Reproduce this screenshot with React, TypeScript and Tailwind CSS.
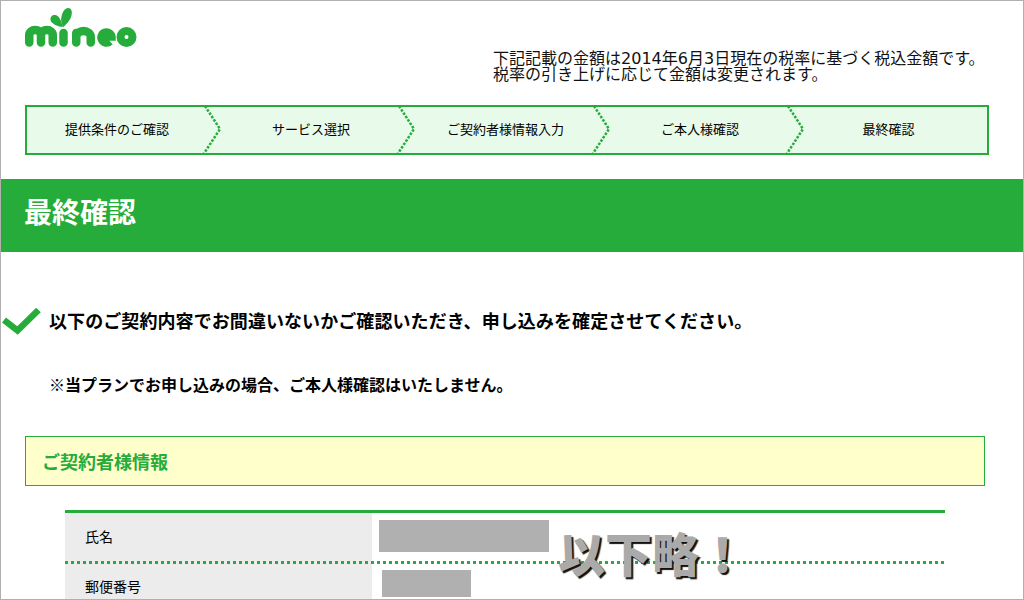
const jp = { fontFamily: '"Noto Sans CJK JP", sans-serif' };

const steps = [
  { label: "提供条件のご確認", cls: "w-[178px] pl-[2px]" },
  { label: "サービス選択", cls: "w-[194px] pl-[18px]" },
  { label: "ご契約者様情報入力", cls: "w-[195px] pl-[18px]" },
  { label: "ご本人様確認", cls: "w-[194px] pl-[18px]" },
  { label: "最終確認", cls: "flex-1 pl-[2px]" },
];

function Logo() {
  return (
    <svg viewBox="25 8 112 40" className="w-[112px] h-[40px] block" fill="none" stroke="#25ac3a" strokeWidth="8.5" strokeLinecap="round">
      {/* m */}
      <path d="M29.250 42.500V35a5.870 5 0 0 1 11.750 0v7.500M41 35a5.870 5 0 0 1 11.750 0v7.500" />
      {/* i + 葉っぱ */}
      <path d="M63.500 33v9.500" />
      <path stroke="none" fill="#25ac3a" d="M63 27.500c-1.500-4.500-2.500-7.500-1.500-11 1-4.500 3.500-8.500 6.500-8.500 3.500 0 4.500 3.500 3.500 7.500-1 4.500-4.500 8-8.500 12z" />
      <path stroke="none" fill="#25ac3a" d="M62.500 27c-5-.5-11.500-3.500-12-7-.3-3.500 2-5.500 5-5 3.500.5 6.500 6.500 7 12z" />
      {/* n */}
      <path d="M76.250 42.500V33M76.250 37a7.250 6 0 0 1 14.500 0v5.500" />
      {/* e */}
      <path strokeWidth="6.500" strokeLinecap="butt" d="M100.500 37.500h12a6 6 0 1 0-2 4.500" />
      {/* o */}
      <circle cx="126.500" cy="37" r="6" strokeWidth="8" />
    </svg>
  );
}

function Chevron() {
  return (
    <svg viewBox="0 0 20 50" className="absolute left-[-3px] top-[-2px] w-[20px] h-[50px]" fill="none" stroke="#25ac3a" strokeWidth="2.500" strokeDasharray="2.500 1.500">
      <path d="M3 1L18 24L1 50" />
    </svg>
  );
}

export default function App() {
  return (
    <div className="box-border w-[1024px] h-[600px] relative overflow-hidden bg-white border border-[#b0b0b0] text-black" style={jp}>
      {/* ヘッダー */}
      <div className="flex h-[104px]">
        <div className="pl-[24px] pt-[7px]">
          <Logo />
        </div>
        <div className="ml-[356px] pt-[48px] text-[16px] leading-[16px] text-[#111]">
          <p className="h-[16px] whitespace-nowrap">
            下記記載の金額は<span className="font-['DejaVu_Sans']">2014</span>年<span className="font-['DejaVu_Sans']">6</span>月<span className="font-['DejaVu_Sans']">3</span>日現在の税率に基づく税込金額です。
          </p>
          <p className="h-[16px] whitespace-nowrap">税率の引き上げに応じて金額は変更されます。</p>
        </div>
      </div>

      {/* ステップ */}
      <ul className="ml-[24px] w-[964px] h-[50px] flex border-2 border-[#25ac3a] bg-[#e8faea] text-[13px]">
        {steps.map((s, idx) => (
          <li key={idx} className={"relative flex items-center justify-center pb-[2px] " + s.cls}>
            {idx > 0 && <Chevron />}
            <span>{s.label}</span>
          </li>
        ))}
      </ul>

      {/* タイトル */}
      <h1 className="mt-[24px] h-[73px] bg-[#25ac3a] pl-[23px] pb-[9px] flex items-center text-[28px] font-bold text-white">最終確認</h1>

      {/* メッセージ */}
      <div className="mt-[53px] flex items-center h-[32px]">
        <svg viewBox="0 0 40 30" className="ml-[1px] w-[40px] h-[30px] shrink-0" fill="none" stroke="#25ac3a" strokeWidth="6.500">
          <path d="M2 14L15.500 24.500L36.500 4" />
        </svg>
        <p className="ml-[7px] pb-[2px] text-[18px] font-bold whitespace-nowrap tracking-[0.08px]">以下のご契約内容でお間違いないかご確認いただき、申し込みを確定させてください。</p>
      </div>
      <p className="mt-[34px] ml-[48px] h-[28px] leading-[26px] text-[16px] font-bold whitespace-nowrap">※当プランでお申し込みの場合、ご本人様確認はいたしません。</p>

      {/* ご契約者様情報 */}
      <h2 className="mt-[37px] ml-[24px] w-[960px] h-[50px] flex items-center pl-[16px] border border-[#25ac3a] bg-[#ffffcc] text-[18px] font-bold text-[#25ac3a]">ご契約者様情報</h2>

      <div className="mt-[24px] ml-[64px] w-[880px] border-t-[3px] border-[#25ac3a] text-[14px]">
        <div className="relative flex h-[51px]">
          <div className="w-[307px] bg-[#ececec] pl-[20px] pb-[5px] flex items-center">氏名</div>
          <div className="pl-[7px] pt-[7px]">
            <div className="w-[170px] h-[32px] bg-[#b0b0b0]" />
          </div>
          {/* 点線 */}
          <div className="absolute left-0 right-0 bottom-0 h-[3px] bg-[repeating-linear-gradient(90deg,#25ac3a_0,#25ac3a_3px,transparent_3px,transparent_6px)]" />
        </div>
        <div className="flex h-[36px]">
          <div className="w-[307px] bg-[#ececec] pl-[20px] pt-[9px] leading-[26px]">郵便番号</div>
          <div className="pl-[10px] pt-[6px]">
            <div className="w-[89px] h-[27px] bg-[#b0b0b0]" />
          </div>
        </div>
      </div>

      {/* 以下略 */}
      <div className="absolute left-[557px] top-[521px] text-[47px] leading-[60px] font-black text-[#aaaaaa] whitespace-nowrap [text-shadow:2px_2px_1px_#111]">以下略！</div>
    </div>
  );
}
